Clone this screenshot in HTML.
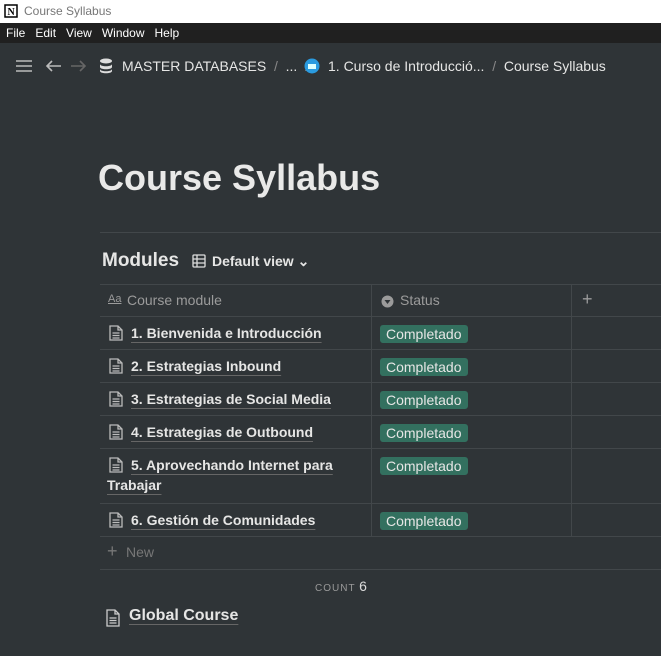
<!DOCTYPE html>
<html><head><meta charset="utf-8"><style>
*{margin:0;padding:0;box-sizing:border-box}
body{width:661px;height:656px;overflow:hidden;background:#2f3437;font-family:"Segoe UI","Liberation Sans",sans-serif;color:#e6e6e5;position:relative}
.abs{position:absolute}
.tb{left:0;top:0;width:661px;height:23px;background:#fff;color:#777;font-size:12px}
.mb{left:0;top:23px;width:661px;height:20px;background:#202020;color:#fff;font-size:12px}
.mb span{margin-left:6px;margin-right:4px;line-height:20px}
.bc{top:58px;font-size:14px;color:#e6e6e5;white-space:nowrap}
.row{position:absolute;left:100px;width:561px;border-bottom:1px solid #42474a;font-size:14px;font-weight:bold}
.c1{position:absolute;left:0;width:272px;top:0;bottom:0;border-right:1px solid #42474a}
.c2{position:absolute;left:272px;width:200px;top:0;bottom:0;border-right:1px solid #42474a}
.tag{position:absolute;left:8px;top:8px;background:#33705f;color:#e6e6e5;font-weight:normal;font-size:14px;padding:0 6px;height:18px;line-height:18px;border-radius:3px}
.t{position:absolute;left:31px;top:6px;text-decoration:underline;text-decoration-color:#666;text-underline-offset:4px;line-height:20px}
.ic{position:absolute;left:9px;top:8px}
</style></head><body>
<div class="abs tb"><svg class="abs" style="left:4px;top:4px" width="14" height="14"><rect x="1" y="1" width="12" height="12" fill="#fff" stroke="#000" stroke-width="1.5"/><text x="3.5" y="11" font-size="10" font-weight="bold" font-family="Liberation Serif">N</text></svg><span class="abs" style="left:24px;top:4px">Course Syllabus</span></div>
<div class="abs mb"><span>File</span><span>Edit</span><span>View</span><span>Window</span><span>Help</span></div>
<svg class="abs" style="left:15px;top:58px" width="80" height="16" stroke="#bbb" stroke-width="1.6" fill="none"><path d="M1 3h16M1 8h16M1 13h16"/><path d="M46 8H32M37 3l-5 5 5 5"/><path stroke="#666" d="M70 8H56M65 3l5 5-5 5"/></svg>
<svg class="abs" style="left:99px;top:58px" width="14" height="16"><ellipse cx="7" cy="3" rx="6" ry="2.5" fill="#ddd"/><path d="M1 6c0 3 12 3 12 0v3c0 3-12 3-12 0zM1 11c0 3 12 3 12 0v2c0 3-12 3-12 0z" fill="#ddd"/></svg>
<div class="abs bc" style="left:122px">MASTER DATABASES <span style="color:#888">&nbsp;/&nbsp;</span> ... <span style="color:#888">&nbsp;/&nbsp;</span></div>
<svg class="abs" style="left:304px;top:58px" width="16" height="16"><circle cx="8" cy="8" r="7.5" fill="#2a9be0"/><rect x="4" y="6" width="8" height="5" fill="#dff"/></svg>
<div class="abs bc" style="left:328px">1. Curso de Introducció... <span style="color:#888">&nbsp;/&nbsp;</span> Course Syllabus</div>
<div class="abs" style="left:98px;top:157px;font-size:36px;font-weight:bold;color:#e9e9e8">Course Syllabus</div>
<div class="abs" style="left:100px;top:232px;width:561px;border-top:1px solid #42474a"></div>
<div class="abs" style="left:102px;top:250px;font-size:19px;font-weight:bold">Modules</div>
<svg class="abs" style="left:192px;top:254px" width="14" height="14" fill="none" stroke="#ddd" stroke-width="1.3"><rect x="1" y="1" width="12" height="12" rx="1"/><path d="M1 5h12M1 9h12M5 1v12"/></svg>
<div class="abs" style="left:212px;top:253px;font-size:14px;font-weight:bold">Default view ⌄</div>
<div class="row" style="top:284px;height:33px;border-top:1px solid #42474a;font-weight:normal;color:#9b9b9b">
<div class="c1"><span class="abs" style="left:8px;top:8px;font-size:11px;text-decoration:underline">Aa</span><span class="abs" style="left:27px;top:7px">Course module</span></div>
<div class="c2"><svg class="abs" style="left:9px;top:10px" width="13" height="13"><circle cx="6.5" cy="6.5" r="6" fill="#9b9b9b"/><path d="M3.5 5h6l-3 4z" fill="#2f3437"/></svg><span class="abs" style="left:28px;top:7px">Status</span></div>
<span class="abs" style="left:482px;top:4px;font-size:18px">+</span>
</div>
<div id="rows"></div>
<script>
var d=[["1. Bienvenida e Introducción",317,33],["2. Estrategias Inbound",350,33],["3. Estrategias de Social Media",383,33],["4. Estrategias de Outbound",416,33],["5. Aprovechando Internet para<br><span style='margin-left:-24px'>Trabajar</span>",449,55],["6. Gestión de Comunidades",504,33]];
var h="";d.forEach(function(r){h+='<div class="row" style="top:'+r[1]+'px;height:'+r[2]+'px"><div class="c1"><svg class="ic" width="14" height="16" fill="none" stroke="#bbb" stroke-width="1.3"><path d="M1 1h8l4 4v10H1z M9 1v4h4 M3.5 8h7M3.5 10.5h7M3.5 13h7"/></svg><span class="t">'+r[0]+'</span></div><div class="c2"><span class="tag">Completado</span></div></div>'});
document.getElementById("rows").innerHTML=h;
</script>
<div class="row" style="top:537px;height:33px;font-weight:normal;color:#777"><span class="abs" style="left:7px;top:4px;font-size:18px">+</span><span class="abs" style="left:26px;top:7px">New</span></div>
<div class="abs" style="left:315px;top:578px;font-size:10px;color:#999;letter-spacing:1px">COUNT <span style="font-size:14px;color:#ddd;letter-spacing:0">6</span></div>
<svg class="abs" style="left:106px;top:609px" width="14" height="18" fill="none" stroke="#ccc" stroke-width="1.3"><path d="M1 1h8l4 4v12H1z M9 1v4h4 M3.5 9h7M3.5 11.5h7M3.5 14h7"/></svg>
<div class="abs" style="left:129px;top:607px;font-size:16px;font-weight:bold;text-decoration:underline;text-decoration-color:#666;text-underline-offset:4px">Global Course</div>
</body></html>
